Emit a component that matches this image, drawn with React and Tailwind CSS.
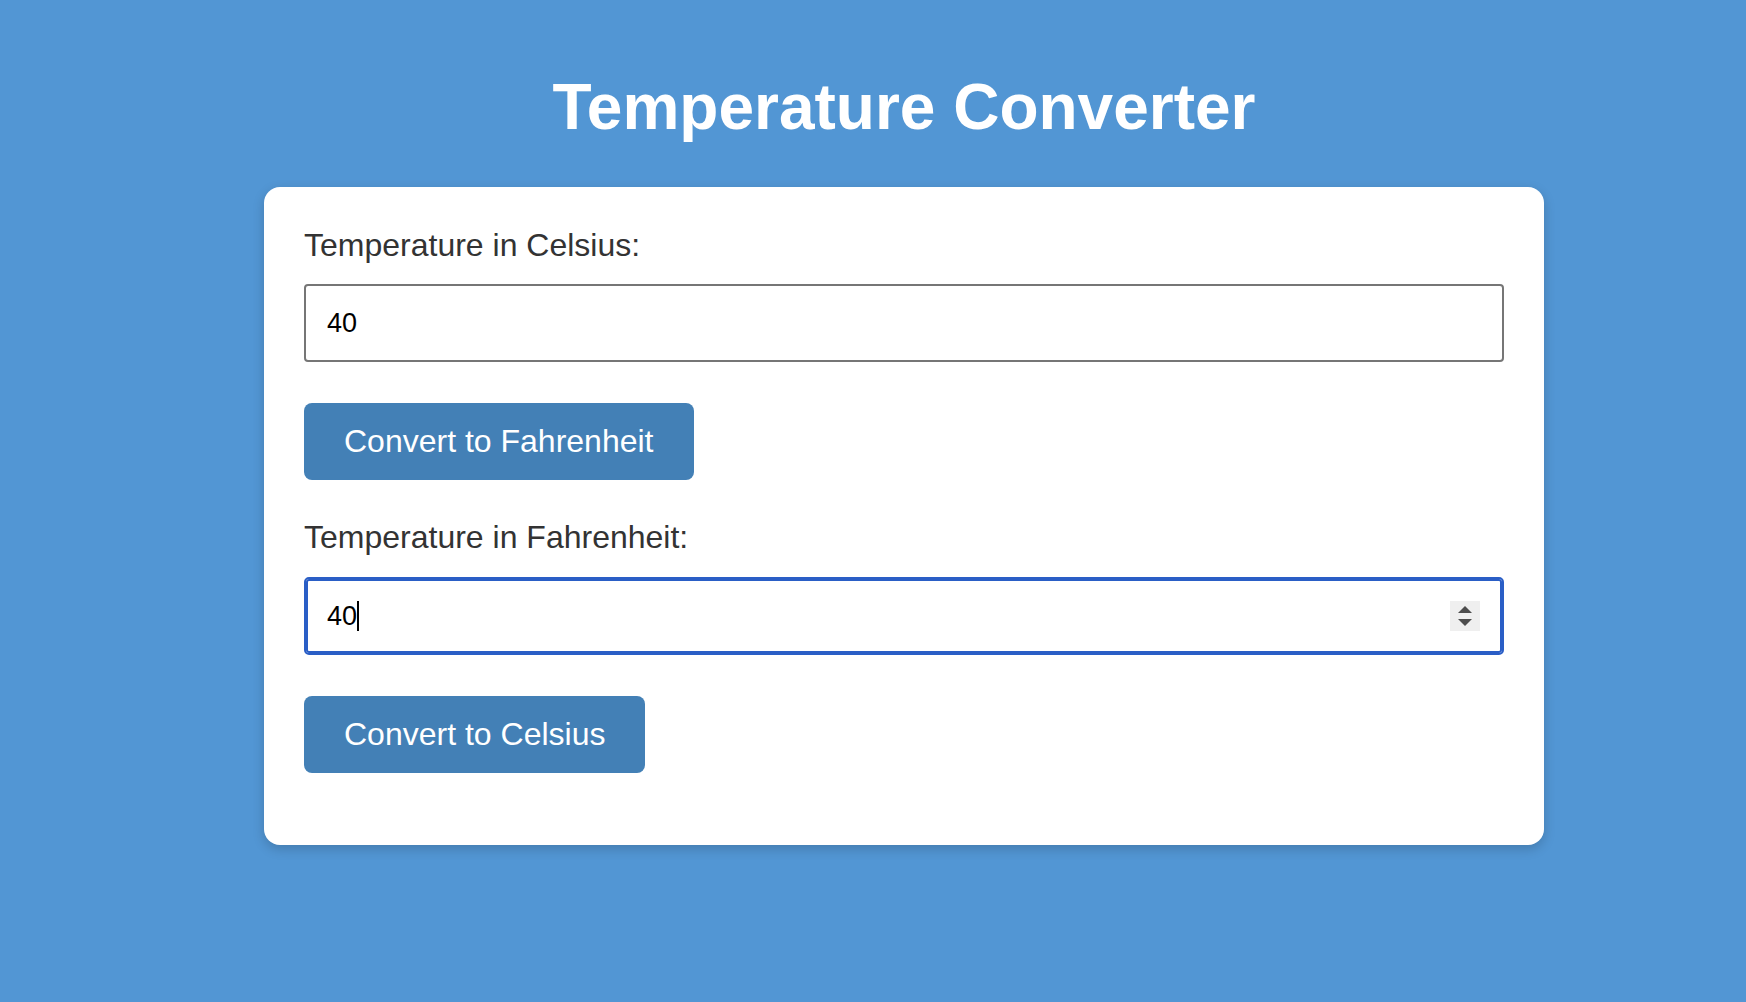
import React, { useState } from "react";

function Spinner() {
  return (
    <div className="absolute right-[24px] top-1/2 -translate-y-1/2 w-[30px] h-[30px] bg-[#efefef] flex flex-col items-center justify-center gap-[6px]">
      <svg width="14" height="7" viewBox="0 0 14 7">
        <path d="M7 0 L14 7 L0 7 Z" fill="#4d4d4d" />
      </svg>
      <svg width="14" height="7" viewBox="0 0 14 7">
        <path d="M0 0 L14 0 L7 7 Z" fill="#4d4d4d" />
      </svg>
    </div>
  );
}

export default function App() {
  const [celsius, setCelsius] = useState("40");
  const [fahrenheit, setFahrenheit] = useState("40");

  const toFahrenheit = () => {
    const c = parseFloat(celsius);
    if (!isNaN(c)) setFahrenheit(String(Math.round((c * 9) / 5 + 32)));
  };

  const toCelsius = () => {
    const f = parseFloat(fahrenheit);
    if (!isNaN(f)) setCelsius(String(Math.round(((f - 32) * 5) / 9)));
  };

  return (
    <div className="min-h-[1002px] bg-[#5296d4] pl-[62px] pt-[71px] font-['Liberation_Sans',Arial,sans-serif]">
      <h1 className="text-center text-white font-bold text-[64px] leading-[1.15] mb-[42px]">
        Temperature Converter
      </h1>

      {/* card */}
      <div className="mx-auto w-[1280px] bg-white rounded-[16px] px-[40px] pt-[40px] pb-[32px] shadow-[0_4px_12px_rgba(0,0,0,0.18)]">
        <label className="block text-[#333333] text-[32px] leading-[1.15] mb-[21px]">
          Temperature in Celsius:
        </label>
        <input
          type="text"
          value={celsius}
          onChange={(e) => setCelsius(e.target.value)}
          className="block w-full h-[78px] border-2 border-[#767676] rounded-[4px] pl-[21px] text-[27px] text-black outline-none mb-[41px]"
        />
        <button
          onClick={toFahrenheit}
          className="block bg-[#4380b6] text-white text-[32px] leading-[37px] py-[20px] px-[40px] rounded-[8px] mb-[39px]"
        >
          Convert to Fahrenheit
        </button>

        <label className="block text-[#333333] text-[32px] leading-[1.15] mb-[21px]">
          Temperature in Fahrenheit:
        </label>
        <div className="relative mb-[41px]">
          <input
            type="text"
            value={fahrenheit}
            onChange={(e) => setFahrenheit(e.target.value)}
            className="block w-full h-[78px] border-2 border-[#2a5ec6] shadow-[inset_0_0_0_2px_#2a5ec6] rounded-[5px] pl-[21px] text-[27px] text-black outline-none"
          />
          {/* caret */}
          <span className="absolute left-[53px] top-[24px] w-[1.5px] h-[30px] bg-black" />
          <Spinner />
        </div>
        <button
          onClick={toCelsius}
          className="block bg-[#4380b6] text-white text-[32px] leading-[37px] py-[20px] px-[40px] rounded-[8px] mb-[40px]"
        >
          Convert to Celsius
        </button>
      </div>
    </div>
  );
}
